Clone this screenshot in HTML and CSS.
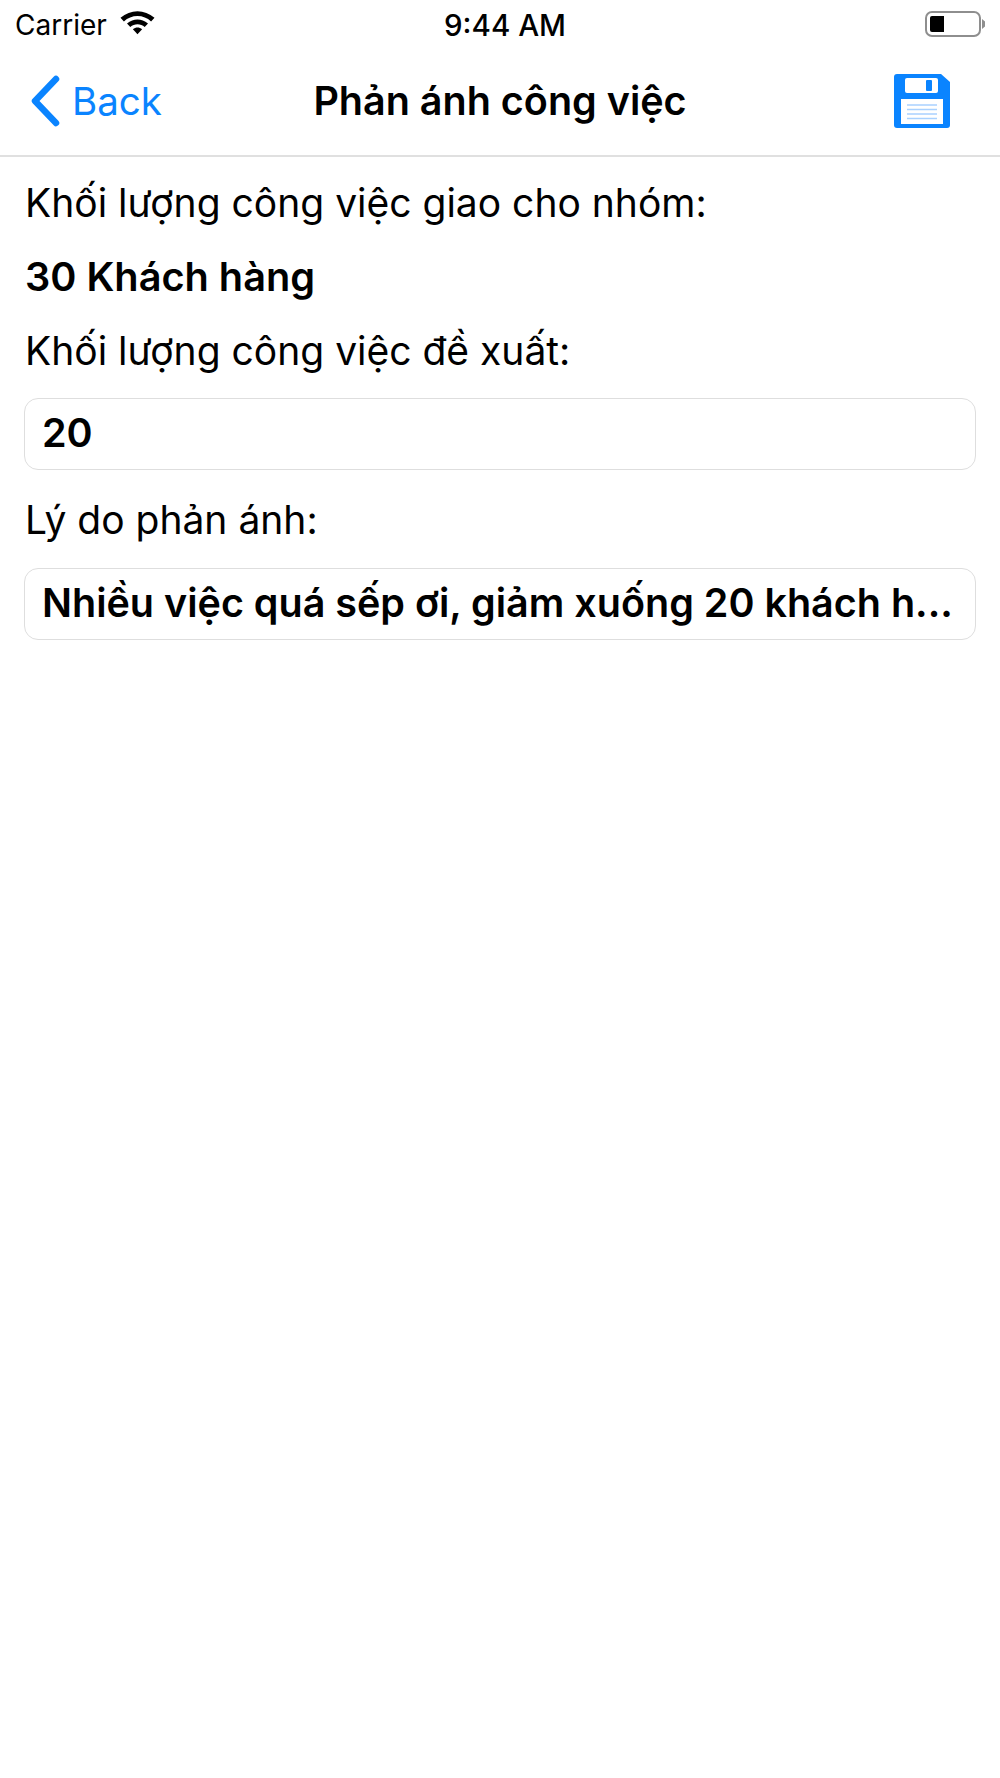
FILE: index.html
```html
<!DOCTYPE html>
<html lang="vi">
<head>
<meta charset="utf-8">
<title>Phản ánh công việc</title>
<link rel="stylesheet" href="styles.css">
</head>
<body>
<div class="status">
  <div class="status-left">
    <span>Carrier</span>
    <svg class="wifi" viewBox="0 0 34 24"><path d="M17 1C11 1 5.500 3.300 0.500 7.500L3.800 11C7.400 7.700 12 5.800 17 5.800S26.600 7.700 30.200 11L33.500 7.500C28.500 3.300 23 1 17 1Z"/><path d="M17 9C13.500 9 10 10.400 6.800 13L10 16.400C12 14.600 14.400 13.700 17 13.700S22 14.600 24 16.400L27.200 13C24 10.400 20.500 9 17 9Z"/><path d="M17 16.800C15.400 16.800 14 17.400 12.500 18.500L17 23.500 21.500 18.500C20 17.400 18.600 16.800 17 16.800Z"/></svg>
  </div>
  <div class="status-time">9:44 AM</div>
  <div class="status-right">
    <svg class="battery" viewBox="0 0 60 28"><rect x="1" y="2" width="54" height="24" rx="6" fill="none" stroke="#8e8e8e" stroke-width="2"/><path d="M5 8a2 2 0 0 1 2-2H19V22H7a2 2 0 0 1-2-2Z" fill="#000"/><path d="M57 9L60 11.500V16.500L57 19Z" fill="#8e8e8e"/></svg>
  </div>
</div>
<nav class="nav">
  <div class="back">
    <svg class="chevron" viewBox="0 0 30 52"><path d="M26 4L5 26L26 48" fill="none" stroke="#0a84ff" stroke-width="6.500" stroke-linecap="round" stroke-linejoin="round"/></svg>
    <span>Back</span>
  </div>
  <div class="title">Phản ánh công việc</div>
  <svg class="save" viewBox="0 0 56 54"><path d="M3 0H47L56 8V51a3 3 0 0 1-3 3H3a3 3 0 0 1-3-3V3a3 3 0 0 1 3-3Z" fill="#0a84ff"/><rect x="11" y="4" width="33" height="15" rx="2" fill="#fff"/><rect x="32" y="6" width="6" height="11" rx="1" fill="#0a84ff"/><rect x="7" y="25" width="42" height="25" fill="#fff"/><path d="M13 31H43M13 35.500H43M13 40H43M13 44.500H43" stroke="#a9d1ff" stroke-width="1.500"/></svg>
</nav>
<main class="content">
  <div class="label">Khối lượng công việc giao cho nhóm:</div>
  <div class="value">30 Khách hàng</div>
  <div class="label label-tight">Khối lượng công việc đề xuất:</div>
  <div class="field">20</div>
  <div class="label label-after">Lý do phản ánh:</div>
  <div class="field field-last">Nhiều việc quá sếp ơi, giảm xuống 20 khách h...</div>
</main>
</body>
</html>
```

FILE: styles.css
```css
* { box-sizing: border-box; }
html, body { margin: 0; padding: 0; background: #fff; }
body { width: 1000px; height: 1778px; font-family: Inter, "Noto Sans", sans-serif; color: #000; overflow: hidden; }
.status { height: 47px; display: grid; grid-template-columns: 1fr auto 1fr; align-items: center; padding: 2px 15px 0; }
.status-left { display: flex; align-items: center; gap: 13px; font-size: 28px; }
.wifi { width: 35px; height: 25px; margin-top: -4px; }
.status-time { font-size: 29.500px; font-weight: 500; margin-left: 10px; }
.status-right { display: flex; justify-content: flex-end; }
.battery { width: 60px; height: 28px; margin-top: -1px; }
.nav { height: 110px; border-bottom: 2px solid #e0e0e0; display: flex; align-items: center; justify-content: space-between; padding: 0 50px 0 30px; position: relative; }
.back { display: flex; align-items: center; gap: 12px; color: #0a84ff; font-size: 38.500px; }
.chevron { width: 30px; height: 52px; }
.title { position: absolute; left: 0; right: 0; text-align: center; font-size: 39.500px; font-weight: 600; }
.save { width: 56px; height: 54px; }
.content { padding: 0 24px; }
.label { font-size: 39px; line-height: 46px; margin-top: 23px; padding-left: 1px; }
.value { font-size: 39.700px; line-height: 46px; font-weight: 600; margin-top: 28px; padding-left: 1px; }
.label-tight { margin-top: 28px; }
.label-after { margin-top: 27px; }
.field { height: 72px; margin-top: 24px; border: 1.500px solid #dedede; border-radius: 14px; padding: 0 17px; font-size: 39.500px; font-weight: 600; line-height: 69px; white-space: nowrap; overflow: hidden; }
.field-last { margin-top: 25px; }
```
